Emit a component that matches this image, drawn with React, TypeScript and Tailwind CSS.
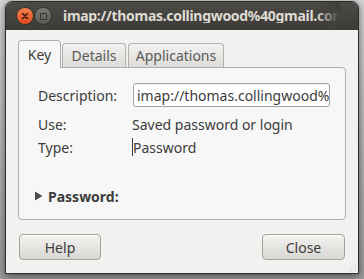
import React from "react";

const font = { fontFamily: '"Noto Sans", "DejaVu Sans", sans-serif' };

export default function App() {
  return (
    <div
      className="w-[364px] h-[279px] overflow-hidden bg-gradient-to-b from-[#d6d6d6] to-[#9c9c9c] pl-[5px] pt-[1px]"
      style={font}
    >
      <div className="w-[354px] h-[273px] flex flex-col rounded-t-[7px] border border-[#2e2d2a] shadow-[0_2px_9px_rgba(0,0,0,0.55)] overflow-hidden">
        {/* Title bar */}
        <div className="h-[28px] shrink-0 flex items-center bg-gradient-to-b from-[#4b4a46] to-[#3c3b37] pl-[11px] pr-[18px] relative">
          <div className="w-[16px] h-[16px] rounded-full bg-gradient-to-b from-[#f7814f] to-[#e0481b] flex items-center justify-center shadow-[0_0_0_1px_rgba(0,0,0,0.25)]">
            <svg width="8" height="8" viewBox="0 0 8 8">
              <path d="M1.5 1.5 L6.5 6.5 M6.5 1.5 L1.5 6.5" stroke="#3a1a0c" strokeWidth="1.6" strokeLinecap="round" />
            </svg>
          </div>
          <div className="ml-[2px] w-[16px] h-[16px] rounded-full bg-gradient-to-b from-[#7b7a75] to-[#5a5954] flex items-center justify-center shadow-[0_0_0_1px_rgba(0,0,0,0.25)]">
            <div className="w-[7px] h-[7px] border border-[#35342f] rounded-[1px]" />
          </div>
          <div className="ml-[12px] flex-1 overflow-hidden whitespace-nowrap text-[14px] tracking-[-0.3px] font-bold text-[#dfdbd2] leading-none">
            imap://thomas.collingwood%40gmail.com
          </div>
          <div className="absolute right-[18px] top-0 h-full w-[24px] bg-gradient-to-r from-transparent to-[#403f3b]" />
        </div>

        {/* Body */}
        <div className="flex-1 bg-[#f2f1f0] flex flex-col pl-[12px] pr-[12px] pt-[10px] relative">
          {/* Tabs */}
          <div className="flex items-end h-[28px] -mb-[1px] relative z-10">
            <div className="w-[43px] h-[28px] bg-[#f7f7f7] border border-b-0 border-[#b1aea9] rounded-t-[4px] flex items-center justify-center text-[14px] text-[#3c3c3c]">
              Key
            </div>
            <div className="ml-[1px] w-[64px] h-[24px] mb-[1px] bg-gradient-to-b from-[#f2f1f0] to-[#dedcd8] border border-b-0 border-[#b5b2ad] rounded-t-[4px] flex items-center justify-center text-[14px] text-[#5a5a5a]">
              Details
            </div>
            <div className="ml-[2px] w-[96px] h-[24px] mb-[1px] bg-gradient-to-b from-[#f2f1f0] to-[#dedcd8] border border-b-0 border-[#b5b2ad] rounded-t-[4px] flex items-center justify-center text-[14px] text-[#5a5a5a]">
              Applications
            </div>
          </div>

          {/* Page */}
          <div className="w-[328px] h-[153px] bg-[#f7f7f7] border border-[#b1aea9] rounded-b-[4px] rounded-tr-[4px] pl-[19px] pt-[15px] text-[14px] text-[#3c3c3c]">
            <div className="flex items-center h-[24px]">
              <div className="w-[95px]">Description:</div>
              <div className="w-[197px] h-[24px] bg-white border border-[#a9a6a1] rounded-[3px] flex items-center pl-[3px] overflow-hidden whitespace-nowrap shadow-[inset_0_1px_1px_rgba(0,0,0,0.08)]">
                imap://thomas.collingwood%40gmail.com
              </div>
            </div>
            <div className="flex items-center h-[20px] mt-[7px]">
              <div className="w-[94px]">Use:</div>
              <div>Saved password or login</div>
            </div>
            <div className="flex items-center h-[20px] mt-[3px]">
              <div className="w-[94px]">Type:</div>
              <div className="flex items-center">
                <div className="w-[1px] h-[18px] bg-[#3c3c3c]" />
                <span>Password</span>
              </div>
            </div>
            <div className="flex items-center h-[20px] mt-[29px] -ml-[4px]">
              <svg width="9" height="10" viewBox="0 0 9 10" className="mr-[5px]">
                <polygon points="1,0.5 8.5,5 1,9.5" fill="#4a4a4a" />
              </svg>
              <span className="font-bold">Password:</span>
            </div>
          </div>

          {/* Buttons */}
          <div className="flex justify-between mt-[14px] pl-[1px] pr-[1px]">
            <div className="w-[82px] h-[26px] rounded-[4px] border border-[#a4a19c] bg-gradient-to-b from-[#f4f3f1] to-[#d9d7d3] shadow-[inset_0_1px_0_rgba(255,255,255,0.8)] flex items-center justify-center text-[14px] text-[#3c3c3c]">
              Help
            </div>
            <div className="w-[83px] h-[26px] rounded-[4px] border border-[#a4a19c] bg-gradient-to-b from-[#f4f3f1] to-[#d9d7d3] shadow-[inset_0_1px_0_rgba(255,255,255,0.8)] flex items-center justify-center text-[14px] text-[#3c3c3c]">
              Close
            </div>
          </div>

          {/* Resize grip */}
          <svg width="10" height="10" viewBox="0 0 10 10" className="absolute right-[1px] bottom-[1px]">
            <g fill="#c9c6c1">
              <rect x="8" y="2" width="1" height="1" />
              <rect x="6" y="4" width="1" height="1" />
              <rect x="8" y="4" width="1" height="1" />
              <rect x="4" y="6" width="1" height="1" />
              <rect x="6" y="6" width="1" height="1" />
              <rect x="8" y="6" width="1" height="1" />
              <rect x="2" y="8" width="1" height="1" />
              <rect x="4" y="8" width="1" height="1" />
              <rect x="6" y="8" width="1" height="1" />
              <rect x="8" y="8" width="1" height="1" />
            </g>
          </svg>
        </div>
      </div>
    </div>
  );
}
